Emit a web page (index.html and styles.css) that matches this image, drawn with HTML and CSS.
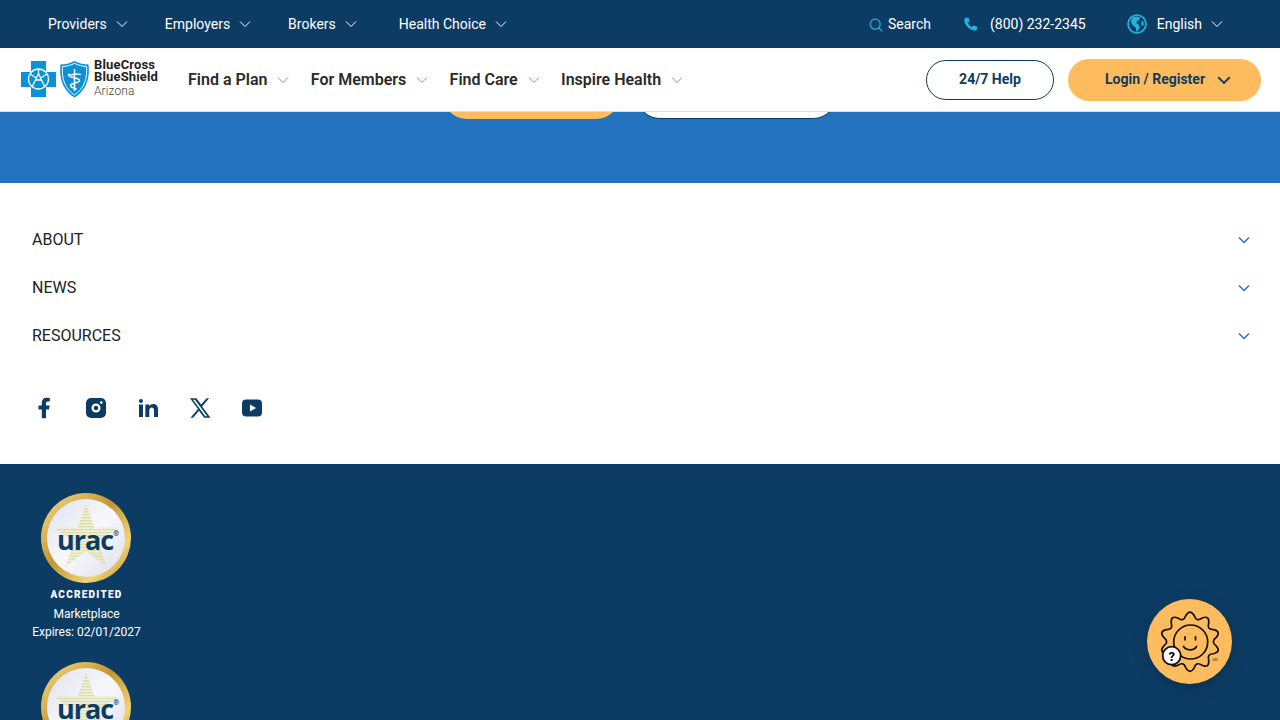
FILE: index.html
```html
<!DOCTYPE html>
<html lang="en">
<head>
<meta charset="utf-8">
<title>Blue Cross Blue Shield of Arizona</title>
<link rel="stylesheet" href="styles.css">
</head>
<body>
<svg class="defs" width="0" height="0" aria-hidden="true">
  <symbol id="chev" viewBox="0 0 12 8"><path d="M1 1.500l5 5 5-5" fill="none" stroke="currentColor"/></symbol>
</svg>
<header class="topbar">
  <nav class="top-left">
    <a class="top-item">Providers<svg class="chev"><use href="#chev"/></svg></a>
    <a class="top-item">Employers<svg class="chev"><use href="#chev"/></svg></a>
    <a class="top-item top-item-wide">Brokers<svg class="chev"><use href="#chev"/></svg></a>
    <a class="top-item">Health Choice<svg class="chev"><use href="#chev"/></svg></a>
  </nav>
  <div class="top-right">
    <a class="top-tool tool-search"><svg class="i-search" viewBox="0 0 14 14"><circle cx="6.200" cy="6.200" r="5" fill="none" stroke="#22b3dc" stroke-width="1.200"/><path d="M10 10l3.300 3.300" stroke="#22b3dc" stroke-width="1.200"/></svg>Search</a>
    <a class="top-tool tool-phone"><svg class="i-phone" viewBox="0 0 24 24"><path fill="#22b3dc" d="M6.600 2.200l3 .6 1 5-2.400 1.900c1 2.500 3 4.600 5.600 5.900l2.100-2.300 5 1.200.5 3.300c.1 1.200-.9 2.400-2.600 2.900C10.900 21 2.900 12.800 3.100 5.100c.1-1.500 1.900-3 3.500-2.900z"/></svg>(800) 232-2345</a>
    <a class="top-tool tool-lang"><svg class="i-globe" viewBox="0 0 20 20"><circle cx="10" cy="10" r="8.900" fill="#0c3c64" stroke="#22b3dc" stroke-width="1.800"/><path fill="#22b3dc" d="M6 3.200l4-.8 3.200 1.200-1 2.600-2.400.7-.4 2 2.300 1.600 1 2.500-1.600 3.800-1.500 1.200-1-4.500-2.700-2L4 8.400l.4-3zM14.600 6.500l1.800 1.200.3 3-1.400 1.500-1.100-2z"/></svg>English<svg class="chev"><use href="#chev"/></svg></a>
  </div>
</header>
<header class="mainnav">
  <div class="nav-left">
    <a class="logo">
      <svg class="logo-marks" viewBox="0 0 68 37">
        <path fill="#0a92d6" d="M10 0h15v11h10v15H25v10H10V26H0V11h10z"/>
        <circle cx="17.500" cy="18" r="10" fill="none" stroke="#fff" stroke-width="1.300"/>
        <path d="M17.500 8v7M9 13l6.500 4M26 13l-6.500 4M15.500 17L11 26M19.500 17l4.500 9M17.500 12.500l3 6.500h-6z" fill="none" stroke="#fff" stroke-width="1.300"/>
        <path fill="#0a92d6" d="M39.500 3.500C44 3.500 49 2.500 53.500 0 58 2.500 63 3.500 67.500 3.500 69 16 66 29 53.500 36.500 41 29 38 16 39.500 3.500z"/>
        <path fill="none" stroke="#fff" stroke-width="1" d="M41.500 5.500C45.500 5.300 50 4.200 53.500 2.300 57 4.200 61.500 5.300 65.500 5.500 66.500 16 64 27 53.500 34 43 27 40.500 16 41.500 5.500z"/>
        <path fill="none" stroke="#fff" stroke-width="1.500" d="M53.500 8v22M47 13c3 2 11-1 13 .5M47.500 14c0 3 11 2.500 11 5.500s-9 2-9 5 6 2 6 4"/>
      </svg>
      <span class="logo-text"><b>BlueCross</b><b>BlueShield</b><span>Arizona</span></span>
    </a>
    <nav class="nav-links">
      <a class="nav-item">Find a Plan<svg class="chev"><use href="#chev"/></svg></a>
      <a class="nav-item">For Members<svg class="chev"><use href="#chev"/></svg></a>
      <a class="nav-item">Find Care<svg class="chev"><use href="#chev"/></svg></a>
      <a class="nav-item">Inspire Health<svg class="chev"><use href="#chev"/></svg></a>
    </nav>
  </div>
  <div class="nav-right">
    <a class="btn-help">24/7 Help</a>
    <a class="btn-login">Login / Register<svg class="chev-login"><use href="#chev"/></svg></a>
  </div>
</header>
<section class="hero">
  <a class="hero-btn hero-orange"></a>
  <a class="hero-btn hero-white"></a>
</section>
<section class="links">
  <div class="acc-row"><span>ABOUT</span><svg class="chev"><use href="#chev"/></svg></div>
  <div class="acc-row"><span>NEWS</span><svg class="chev"><use href="#chev"/></svg></div>
  <div class="acc-row"><span>RESOURCES</span><svg class="chev"><use href="#chev"/></svg></div>
  <div class="social">
    <svg viewBox="0 0 24 24"><path d="M14 13.500h3l.7-4H14v-2c0-1.030.3-2 2-2h1.800V1.900c-.4-.1-1.700-.2-3.100-.2C11.700 1.700 9.800 3.500 9.800 6.800v2.700H6.500v4h3.300v8.800H14z"/></svg>
    <svg viewBox="0 0 24 24"><path fill-rule="evenodd" d="M7 2h10a5 5 0 0 1 5 5v10a5 5 0 0 1-5 5H7a5 5 0 0 1-5-5V7a5 5 0 0 1 5-5zm5 5.500a4.500 4.500 0 1 0 0 9 4.500 4.500 0 0 0 0-9zm0 2.200a2.300 2.300 0 1 1 0 4.600 2.300 2.300 0 0 1 0-4.600zM17.300 5.300a1.300 1.300 0 1 0 0 2.600 1.300 1.300 0 0 0 0-2.600z"/></svg>
    <svg viewBox="0 0 24 24"><path d="M6.940 5a2 2 0 1 1-4-.002 2 2 0 0 1 4 .002zM7 8.480H3V21h4V8.480zm6.320 0H9.340V21h3.940v-6.570c0-3.660 4.770-4 4.770 0V21H22v-7.930c0-6.170-7.060-5.940-8.720-2.910l.04-1.680z"/></svg>
    <svg viewBox="0 0 24 24"><path fill-rule="evenodd" d="M18.600 2.250h2.500l-7 8.200 8.400 11.300h-6.300l-5.200-6.900-6 6.900H2.500l7.500-8.700-8-10.800h6.400l4.700 6.300zM17.300 20.300h1.900L7 3.700H5z"/></svg>
    <svg viewBox="0 0 24 24"><path fill-rule="evenodd" d="M6 3.500h12c2.500 0 4 1.500 4 4v9c0 2.500-1.500 4-4 4H6c-2.500 0-4-1.500-4-4v-9c0-2.500 1.500-4 4-4zm4 5v7l6-3.500z"/></svg>
  </div>
</section>
<footer class="footer">
  <div class="badge">
    <div class="seal">
      <div class="seal-face">
        <svg class="seal-star" viewBox="0 0 80 80"><defs><pattern id="stripes" width="4" height="3.500" patternUnits="userSpaceOnUse"><rect width="4" height="1.800" fill="#dcdc96"/></pattern></defs><polygon fill="url(#stripes)" points="40,2 50,30 78,30 55,47 64,76 40,58 16,76 25,47 2,30 30,30"/></svg>
        <span class="seal-word">urac<sup class="seal-reg">®</sup></span>
      </div>
    </div>
    <strong class="badge-title">ACCREDITED</strong>
    <span class="badge-line">Marketplace</span>
    <span class="badge-line">Expires: 02/01/2027</span>
  </div>
  <div class="badge">
    <div class="seal">
      <div class="seal-face">
        <svg class="seal-star" viewBox="0 0 80 80"><polygon fill="url(#stripes)" points="40,2 50,30 78,30 55,47 64,76 40,58 16,76 25,47 2,30 30,30"/></svg>
        <span class="seal-word">urac<sup class="seal-reg">®</sup></span>
      </div>
    </div>
  </div>
</footer>
<a class="chat">
  <svg viewBox="0 0 85 85">
    <path transform="translate(43 42.700)" fill="none" stroke="#111" stroke-width="1.700" stroke-linejoin="round" d="M-4.150 -26.170Q0 -33 4.150 -26.170Q6.330 -19.500 12.030 -23.610Q19.400 -26.700 18.740 -18.740Q16.600 -12.050 23.610 -12.030Q31.400 -10.200 26.170 -4.150Q20.500 0 26.170 4.150Q31.400 10.200 23.610 12.030Q16.600 12.050 18.740 18.740Q19.400 26.700 12.030 23.610Q6.330 19.500 4.150 26.170Q0 33 -4.150 26.170Q-6.330 19.500 -12.030 23.610Q-19.400 26.700 -18.740 18.740Q-16.600 12.050 -23.610 12.030Q-31.400 10.200 -26.170 4.150Q-20.500 0 -26.170 -4.150Q-31.400 -10.200 -23.610 -12.030Q-16.600 -12.050 -18.740 -18.740Q-19.400 -26.700 -12.030 -23.610Q-6.330 -19.500 -4.150 -26.170Z"/>
    <circle cx="43.700" cy="43" r="17" fill="none" stroke="#111" stroke-width="1.700"/>
    <path d="M38 37.800v3M48.500 37.800v3" stroke="#111" stroke-width="1.700" stroke-linecap="round"/>
    <path d="M36.500 47.500c3 4.500 10.500 4.500 13 0" fill="none" stroke="#111" stroke-width="1.700" stroke-linecap="round"/>
    <circle cx="24.700" cy="56.700" r="9" fill="#fff" stroke="#111" stroke-width="1.800"/>
    <text x="24.700" y="61.500" text-anchor="middle" class="chat-q">?</text>
    <text x="68" y="62" text-anchor="middle" class="chat-sm">SM</text>
  </svg>
</a>
</body>
</html>
```
FILE: styles.css
```css
* { box-sizing: border-box; }
html, body { height: 720px; overflow: hidden; }
body { margin: 0; font-family: Roboto, "Liberation Sans", sans-serif; color: #222; background: #fff; }
.defs { position: absolute; }
a { color: inherit; text-decoration: none; }
svg { display: block; flex: none; }
.chev { width: 12px; height: 8px; stroke-width: 1; }

.topbar { height: 48px; background: #0c3c64; color: #fff; display: flex; justify-content: space-between; align-items: center; padding: 0 57px 0 48px; font-size: 14px; }
.top-left, .top-right { display: flex; align-items: center; }
.top-item { display: flex; align-items: center; gap: 9px; margin-right: 37px; white-space: nowrap; }
.top-item-wide { margin-right: 42px; }
.top-tool { display: flex; align-items: center; white-space: nowrap; }
.tool-search { margin-right: 31px; gap: 5px; }
.tool-phone { margin-right: 41px; gap: 11px; }
.tool-lang { gap: 10px; }
.tool-lang .chev { margin-left: -1px; }
.i-search { width: 14px; height: 14px; margin-top: 2px; }
.i-phone { width: 17px; height: 17px; }
.i-globe { width: 20px; height: 20px; }

.mainnav { position: relative; z-index: 2; height: 64px; background: #fff; border-bottom: 1px solid #ddd; display: flex; justify-content: space-between; align-items: center; padding: 0 19px 0 21px; margin-bottom: -1px; }
.nav-left, .nav-right, .nav-links { display: flex; align-items: center; }
.logo { display: flex; align-items: center; gap: 5px; margin-right: 30px; }
.logo-marks { width: 68px; height: 37px; }
.logo-text { display: flex; flex-direction: column; font-size: 13px; line-height: 12.500px; color: #222; letter-spacing: .15px; margin-bottom: 3px; }
.logo-text span { margin-top: 1px; font-size: 12px; font-weight: 300; letter-spacing: .1px; color: #444; }
.nav-links { gap: 21.300px; }
.nav-item { display: flex; align-items: center; gap: 10px; font-size: 16px; font-weight: 600; color: #2a2a2a; white-space: nowrap; }
.nav-item .chev { color: #5b9bd5; }
.nav-right { gap: 14px; }
.btn-help { width: 128px; height: 40px; padding-bottom: 2px; border: 1px solid #0c3c64; border-radius: 20px; display: flex; align-items: center; justify-content: center; font-size: 14px; font-weight: 700; color: #0c3c64; }
.btn-login { width: 193px; height: 42px; padding: 0 0 2px 7px; border-radius: 21px; background: #ffbc5e; display: flex; align-items: center; justify-content: center; gap: 12px; font-size: 14px; font-weight: 700; color: #0c3c64; }
.chev-login { width: 14px; height: 10px; stroke-width: 1.700; margin-top: 2px; }

.hero { height: 72px; background: #2372bd; overflow: hidden; display: flex; justify-content: center; align-items: flex-start; gap: 16px; }
.hero-btn { height: 48px; margin-top: -40px; border-radius: 24px; }
.hero-orange { width: 177px; background: #ffbc5e; }
.hero-white { width: 201px; background: #fff; border: 1px solid #0c3c64; }

.links { height: 281px; padding: 33px 30px 0 32px; }
.acc-row { height: 48px; display: flex; justify-content: space-between; align-items: center; font-size: 16px; color: #222; }
.acc-row span { margin-bottom: 2px; }
.acc-row .chev { color: #2372bd; stroke-width: 1.500; }
.social { display: flex; gap: 28px; margin-top: 36px; fill: #0c3c64; }
.social svg { width: 24px; height: 24px; }

.footer { height: 256px; background: #0c3c64; padding: 29px 0 0 32px; color: #fff; overflow: hidden; }
.badge { width: 109px; display: flex; flex-direction: column; align-items: center; margin-bottom: 21px; }
.seal { width: 90px; height: 90px; align-self: flex-start; margin-left: 9px; border-radius: 50%; background: linear-gradient(135deg, #f4dc8a, #c4962f 45%, #f2d476 75%, #b0842a); padding: 6px; }
.seal-face { position: relative; width: 78px; height: 78px; border-radius: 50%; background: linear-gradient(135deg, #e0e0ee, #f8f8fc 50%, #dedeec); display: flex; align-items: center; justify-content: center; }
.seal-star { position: absolute; left: 5px; top: 3px; width: 68px; height: 68px; }
.seal-word { position: relative; font-family: "Open Sans", sans-serif; font-size: 27px; font-weight: 700; line-height: 1; letter-spacing: -1px; color: #0c3c64; margin-top: 2px; margin-left: 4px; }
.seal-reg { font-size: 7px; vertical-align: 14px; line-height: 0; letter-spacing: 0; }
.badge-title { margin-top: 6px; font-size: 10px; line-height: 12px; font-weight: 900; letter-spacing: 1.250px; }
.badge-line { font-size: 12px; line-height: 18px; white-space: nowrap; }
.badge-title + .badge-line { margin-top: 4px; }

.chat { position: fixed; left: 1147px; top: 599px; width: 85px; height: 85px; border-radius: 50%; background: #ffbc5e; box-shadow: 0 4px 16px rgba(0, 0, 0, .2); z-index: 3; }
.chat svg { width: 85px; height: 85px; }
.chat-q { font-family: Roboto, sans-serif; font-size: 13px; font-weight: 900; fill: #111; }
.chat-sm { font-family: Roboto, sans-serif; font-size: 3.500px; fill: #333; }
```
